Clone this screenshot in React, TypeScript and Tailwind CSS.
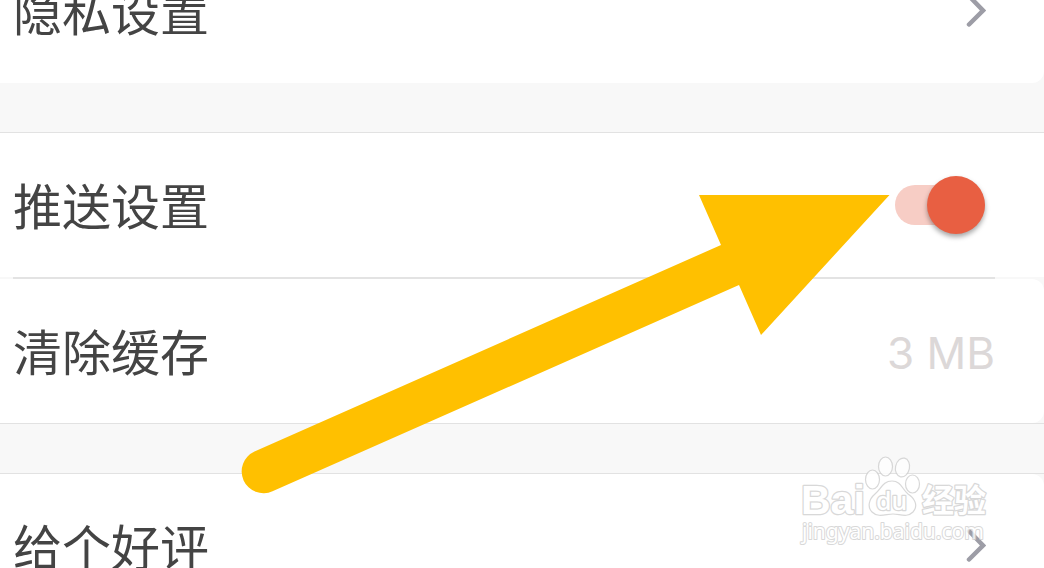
import { useState, type ReactNode } from 'react';

const labelClass = 'pb-0.5 text-[49px] leading-[72px] text-[#444444]';

function Chevron() {
  return (
    <svg className="h-9 w-5 shrink-0" viewBox="0 0 20 36" fill="none" aria-hidden="true">
      <path d="M3 3 L17 17.500 L3 31.500" stroke="#9d9da6" strokeWidth="4.500" strokeLinecap="round" />
    </svg>
  );
}

function LinkRow({ children }: { children: ReactNode }) {
  return (
    <a href="#" className="flex h-36 items-center justify-between pr-[58px] pl-[13px]">
      <span className={labelClass}>{children}</span>
      <Chevron />
    </a>
  );
}

function PushRow() {
  const [enabled, setEnabled] = useState(true);
  return (
    <div className="flex h-36 items-center justify-between bg-white pr-[59px] pl-[13px]">
      <label htmlFor="push" className={labelClass}>
        推送设置
      </label>
      <input
        id="push"
        type="checkbox"
        role="switch"
        checked={enabled}
        onChange={(e) => setEnabled(e.target.checked)}
        className="flex h-10 w-[90px] shrink-0 cursor-pointer appearance-none items-center rounded-full bg-[#dddddd] before:size-[58px] before:shrink-0 before:rounded-full before:bg-white before:shadow-[0_3px_5px_rgba(0,0,0,0.35)] checked:justify-end checked:bg-[#f7cdc5] checked:before:bg-[#e85f42]"
      />
    </div>
  );
}

function Arrow() {
  return (
    <svg
      className="pointer-events-none absolute top-[194px] right-[154px] h-[302px] w-[650px]"
      viewBox="240 194 650 302"
      aria-hidden="true"
    >
      <path
        d="M254.5 451.5 L721 245 L699 195 H889.5 L761 335 L739 285 L272.5 491.300 A21.800 21.800 0 0 1 254.5 451.500 Z"
        fill="#ffc000"
      />
    </svg>
  );
}

function Watermark() {
  return (
    <svg
      className="pointer-events-none absolute top-[452px] right-[50px] h-[96px] w-[196px] opacity-80"
      viewBox="798 452 196 96"
      role="img"
      aria-label="Baidu 经验"
    >
      <g fill="#ffffff" stroke="#cfcfcf" strokeWidth="1.2" strokeLinejoin="round">
        <text x="801" y="514" fontSize="41" fontWeight="700" strokeWidth="2.500" paintOrder="stroke" className="font-['Liberation_Sans',sans-serif]">
          Bai
        </text>
        <ellipse cx="872.5" cy="479.500" rx="7" ry="9.500" />
        <ellipse cx="885.5" cy="466.500" rx="7" ry="9.500" />
        <ellipse cx="902.5" cy="467.500" rx="7" ry="9.500" transform="rotate(12 902.5 467.5)" />
        <ellipse cx="912.5" cy="484" rx="7" ry="9" />
        <path d="M892 481 C883 481 881 489 875 494 C869 499 867 507 872 512 C878 518 886 514 893 514 C900 514 907 518 913 512 C919 505 914 498 908 494 C902 489 901 481 892 481 Z" />
        <text x="876" y="510" fontSize="25" fontWeight="500" strokeWidth="2.500" paintOrder="stroke" className="font-['Noto_Sans',sans-serif]">
          du
        </text>
        <text x="922" y="512" fontSize="32" fontWeight="700" strokeWidth="2.500" paintOrder="stroke" className="font-['Noto_Sans_CJK_SC',sans-serif]">
          经验
        </text>
        <text x="802" y="539" fontSize="21" strokeWidth="2" paintOrder="stroke" className="font-['Noto_Sans',sans-serif]">
          jingyan.baidu.com
        </text>
      </g>
    </svg>
  );
}

export default function App() {
  return (
    <main className="relative h-screen overflow-hidden bg-[#f8f8f8] font-['Noto_Sans_CJK_SC',sans-serif]">
      <section className="-mt-[61px] rounded-br-xl bg-white">
        <LinkRow>隐私设置</LinkRow>
      </section>

      <section className="mt-[49px] border-y border-[#e2e2e2]">
        <PushRow />
        <hr className="mr-[49px] ml-[13px] h-0.5 border-0 bg-[#e3e3e3]" />
        <div className="flex h-36 items-center justify-between rounded-r-xl bg-white pr-[49px] pl-[13px]">
          <span className={labelClass}>清除缓存</span>
          <span className="pt-1 font-['Inter',sans-serif] text-[44px] text-[#dcd8d8]">3 MB</span>
        </div>
      </section>

      <section className="mt-[49px] border-t border-[#e2e2e2]">
        <div className="rounded-tr-xl bg-white">
          <LinkRow>给个好评</LinkRow>
        </div>
      </section>

      <Arrow />
      <Watermark />
    </main>
  );
}
